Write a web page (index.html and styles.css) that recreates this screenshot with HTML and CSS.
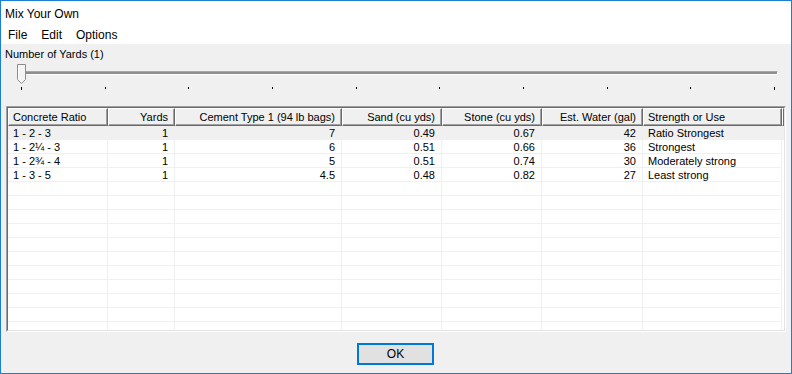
FILE: index.html
```html
<!DOCTYPE html>
<html lang="en">
<head>
    <meta charset="UTF-8">
    <meta name="viewport" content="width=device-width, initial-scale=1.0">
    <title>Mix Your Own</title>
    <link rel="stylesheet" href="styles.css">
</head>
<body>
    <div class="window">
        <div class="titlebar">Mix Your Own</div>
        <div class="menubar">
            <span class="menu-item">File</span>
            <span class="menu-item">Edit</span>
            <span class="menu-item">Options</span>
        </div>
        <div class="content">
            <div class="label">Number of Yards (1)</div>
            <div class="slider">
                <svg class="thumb" width="10" height="21" viewBox="0 0 10 21">
                    <polygon points="0.5,0.5 8.5,0.5 8.5,15.5 4.5,19.5 0.5,15.5" fill="#f4f4f4" stroke="#8c8c8c"/>
                    <line x1="1.5" y1="1.5" x2="1.5" y2="15" stroke="#ffffff"/>
                </svg>
                <div class="track"></div>
                <div class="ticks">
                    <span class="tick end"></span>
                    <span class="tick"></span>
                    <span class="tick"></span>
                    <span class="tick"></span>
                    <span class="tick"></span>
                    <span class="tick"></span>
                    <span class="tick"></span>
                    <span class="tick"></span>
                    <span class="tick"></span>
                    <span class="tick end"></span>
                </div>
            </div>
            <div class="list">
                <div class="list-inner">
                    <div class="row header">
                        <div class="th">Concrete Ratio</div>
                        <div class="th num">Yards</div>
                        <div class="th num">Cement Type 1 (94 lb bags)</div>
                        <div class="th num">Sand (cu yds)</div>
                        <div class="th num">Stone (cu yds)</div>
                        <div class="th num">Est. Water (gal)</div>
                        <div class="th">Strength or Use</div>
                        <div class="th filler"></div>
                    </div>
                    <div class="body">
                        <div class="row hot">
                            <div class="td">1 - 2 - 3</div>
                            <div class="td num">1</div>
                            <div class="td num">7</div>
                            <div class="td num">0.49</div>
                            <div class="td num">0.67</div>
                            <div class="td num">42</div>
                            <div class="td">Ratio Strongest</div>
                        </div>
                        <div class="row">
                            <div class="td">1 - 2¼ - 3</div>
                            <div class="td num">1</div>
                            <div class="td num">6</div>
                            <div class="td num">0.51</div>
                            <div class="td num">0.66</div>
                            <div class="td num">36</div>
                            <div class="td">Strongest</div>
                        </div>
                        <div class="row">
                            <div class="td">1 - 2¾ - 4</div>
                            <div class="td num">1</div>
                            <div class="td num">5</div>
                            <div class="td num">0.51</div>
                            <div class="td num">0.74</div>
                            <div class="td num">30</div>
                            <div class="td">Moderately strong</div>
                        </div>
                        <div class="row">
                            <div class="td">1 - 3 - 5</div>
                            <div class="td num">1</div>
                            <div class="td num">4.5</div>
                            <div class="td num">0.48</div>
                            <div class="td num">0.82</div>
                            <div class="td num">27</div>
                            <div class="td">Least strong</div>
                        </div>
                        <div class="row"><div class="td"></div><div class="td"></div><div class="td"></div><div class="td"></div><div class="td"></div><div class="td"></div><div class="td"></div></div>
                        <div class="row"><div class="td"></div><div class="td"></div><div class="td"></div><div class="td"></div><div class="td"></div><div class="td"></div><div class="td"></div></div>
                        <div class="row"><div class="td"></div><div class="td"></div><div class="td"></div><div class="td"></div><div class="td"></div><div class="td"></div><div class="td"></div></div>
                        <div class="row"><div class="td"></div><div class="td"></div><div class="td"></div><div class="td"></div><div class="td"></div><div class="td"></div><div class="td"></div></div>
                        <div class="row"><div class="td"></div><div class="td"></div><div class="td"></div><div class="td"></div><div class="td"></div><div class="td"></div><div class="td"></div></div>
                        <div class="row"><div class="td"></div><div class="td"></div><div class="td"></div><div class="td"></div><div class="td"></div><div class="td"></div><div class="td"></div></div>
                        <div class="row"><div class="td"></div><div class="td"></div><div class="td"></div><div class="td"></div><div class="td"></div><div class="td"></div><div class="td"></div></div>
                        <div class="row"><div class="td"></div><div class="td"></div><div class="td"></div><div class="td"></div><div class="td"></div><div class="td"></div><div class="td"></div></div>
                        <div class="row"><div class="td"></div><div class="td"></div><div class="td"></div><div class="td"></div><div class="td"></div><div class="td"></div><div class="td"></div></div>
                        <div class="row"><div class="td"></div><div class="td"></div><div class="td"></div><div class="td"></div><div class="td"></div><div class="td"></div><div class="td"></div></div>
                        <div class="row"><div class="td"></div><div class="td"></div><div class="td"></div><div class="td"></div><div class="td"></div><div class="td"></div><div class="td"></div></div>
                    </div>
                </div>
            </div>
            <div class="footer">
                <button class="ok">OK</button>
            </div>
        </div>
    </div>
</body>
</html>
```

FILE: styles.css
```css
* {
    box-sizing: border-box;
}
body {
    margin: 0;
    font-family: "Liberation Sans", Arial, sans-serif;
    color: #000;
    background: #fff;
}
.window {
    width: 792px;
    height: 374px;
    border: 1px solid #1a7fd4;
    display: flex;
    flex-direction: column;
    overflow: hidden;
}
.titlebar {
    height: 21px;
    padding: 6px 0 0 4px;
    font-size: 12px;
    line-height: 14px;
    background: #fff;
}
.menubar {
    height: 22px;
    padding-top: 6px;
    font-size: 12px;
    line-height: 14px;
    background: #fff;
    display: flex;
}
.menu-item {
    padding: 0 7px;
}
.content {
    flex: 1;
    background: #f0f0f0;
    display: flex;
    flex-direction: column;
}
.label {
    padding: 3px 0 0 4px;
    font-size: 11px;
    line-height: 14px;
}
.slider {
    position: relative;
    margin: 3px 13px 0 16px;
    height: 27px;
}
.thumb {
    position: absolute;
    left: 0;
    top: 0;
}
.track {
    margin: 7px 0 0 5px;
    height: 4px;
    background: #8e8e8e;
    border-top: 1px solid #a6a6a6;
    border-bottom: 1px solid #fff;
    border-right: 1px solid #fff;
}
.ticks {
    display: flex;
    justify-content: space-between;
    align-items: flex-start;
    margin: 12px 3px 0 4px;
}
.tick {
    width: 1px;
    height: 2px;
    background: #000;
}
.tick.end {
    height: 3px;
}
.list {
    margin: 15px 0 0 5px;
    width: 780px;
    height: 226px;
    border: 1px solid;
    border-color: #a0a0a0 #fff #fff #a0a0a0;
}
.list-inner {
    height: 100%;
    border: 1px solid;
    border-color: #696969 #e3e3e3 #e3e3e3 #696969;
    background: #fff;
    overflow: hidden;
}
.row {
    display: grid;
    grid-template-columns: 100px 67px 167px 100px 100px 101px 139px 2px;
    font-size: 11px;
}
.th {
    height: 18px;
    padding: 2px 6px 1px 4px;
    line-height: 13px;
    background: #f0f0f0;
    border-top: 1px solid #fff;
    border-left: 1px solid #fff;
    border-right: 1px solid #696969;
    border-bottom: 1px solid #696969;
    box-shadow: inset -1px -1px #a0a0a0;
    white-space: nowrap;
    overflow: hidden;
}
.th.filler {
    padding: 0;
}
.td {
    height: 14px;
    padding: 1px 6px 0 5px;
    line-height: 12px;
    border-right: 1px solid #f0f0f0;
    border-bottom: 1px solid #f0f0f0;
    white-space: nowrap;
    overflow: hidden;
}
.num {
    text-align: right;
}
.row.hot {
    background: #f0f0f0;
}
.footer {
    display: flex;
    justify-content: center;
    padding-top: 11px;
}
.ok {
    width: 77px;
    height: 22px;
    border: 2px solid #0078d7;
    background: #e1e1e1;
    font-family: "Liberation Sans", Arial, sans-serif;
    font-size: 12px;
    color: #000;
    padding: 0;
    margin-left: -1px;
}
```
